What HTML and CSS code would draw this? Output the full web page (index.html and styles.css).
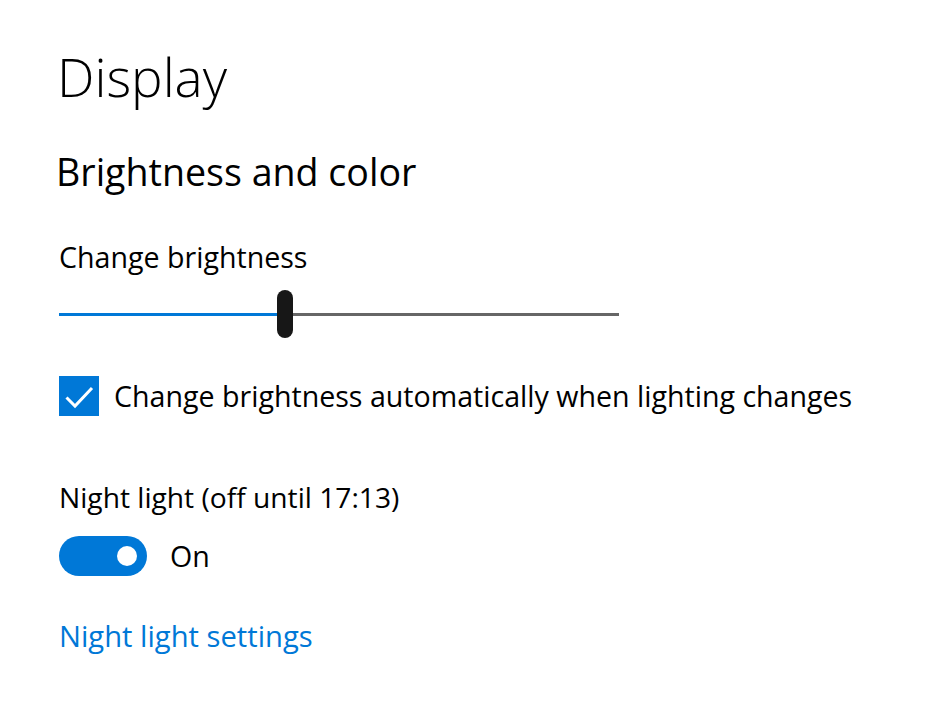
FILE: index.html
```html
<!DOCTYPE html>
<html lang="en">
<head>
<meta charset="utf-8">
<title>Display</title>
<link rel="stylesheet" href="styles.css">
</head>
<body>
<main class="page">
  <h1 class="title">Display</h1>
  <h2 class="subtitle">Brightness and color</h2>
  <div class="label">Change brightness</div>
  <div class="slider">
    <div class="track-fill"></div>
    <div class="thumb"></div>
    <div class="track-rest"></div>
  </div>
  <label class="check-row">
    <span class="checkbox">
      <svg viewBox="0 0 40 40" width="40" height="40"><path d="M7.5 21.5 L16 30 L33 12" fill="none" stroke="#fff" stroke-width="3" stroke-linecap="butt" stroke-linejoin="miter"/></svg>
    </span>
    <span class="check-text">Change brightness automatically when lighting changes</span>
  </label>
  <div class="label night">Night light (off until 17:13)</div>
  <div class="toggle-row">
    <span class="toggle"><span class="knob"></span></span>
    <span class="toggle-text">On</span>
  </div>
  <a class="link" href="#">Night light settings</a>
</main>
</body>
</html>
```

FILE: styles.css
```css
html, body {
  margin: 0;
  padding: 0;
  background: #fff;
}
body {
  font-family: "Open Sans", "Noto Sans", sans-serif;
  color: #000;
}
.page {
  display: flex;
  flex-direction: column;
  align-items: flex-start;
  padding: 41px 0 0 58px;
}
.title {
  margin: 0 0 0 -1px;
  font-weight: 300;
  font-size: 53px;
  line-height: 72px;
}
.subtitle {
  margin: 34px 0 0 -2px;
  font-weight: 400;
  font-size: 37.6px;
  line-height: 50px;
}
.label {
  margin-top: 40px;
  font-size: 28.6px;
  line-height: 40px;
  margin-left: 1px;
}
.slider {
  margin-top: 13px;
  margin-left: 1px;
  width: 560px;
  height: 48px;
  display: flex;
  align-items: center;
}
.track-fill {
  width: 218px;
  height: 3px;
  background: #0078d7;
}
.thumb {
  width: 16px;
  height: 48px;
  border-radius: 8px;
  background: #171717;
}
.track-rest {
  flex: 1;
  height: 3px;
  background: #666;
}
.check-row {
  margin-top: 38px;
  margin-left: 1px;
  display: flex;
  align-items: center;
  gap: 15px;
}
.checkbox {
  width: 40px;
  height: 40px;
  background: #0078d7;
  display: block;
}
.checkbox svg {
  display: block;
}
.check-text {
  font-size: 28.6px;
  line-height: 40px;
}
.label.night {
  margin-top: 61px;
  font-size: 28.2px;
}
.toggle-row {
  margin-top: 19px;
  margin-left: 1px;
  display: flex;
  align-items: center;
  gap: 23px;
}
.toggle {
  width: 88px;
  height: 40px;
  border-radius: 20px;
  background: #0078d7;
  display: flex;
  align-items: center;
  justify-content: flex-end;
  padding-right: 10px;
  box-sizing: border-box;
}
.knob {
  width: 20px;
  height: 20px;
  border-radius: 50%;
  background: #fff;
}
.toggle-text {
  font-size: 28.6px;
  line-height: 40px;
}
.link {
  margin-top: 40px;
  margin-left: 1px;
  font-size: 29.2px;
  line-height: 40px;
  color: #0078d7;
  text-decoration: none;
}
```
